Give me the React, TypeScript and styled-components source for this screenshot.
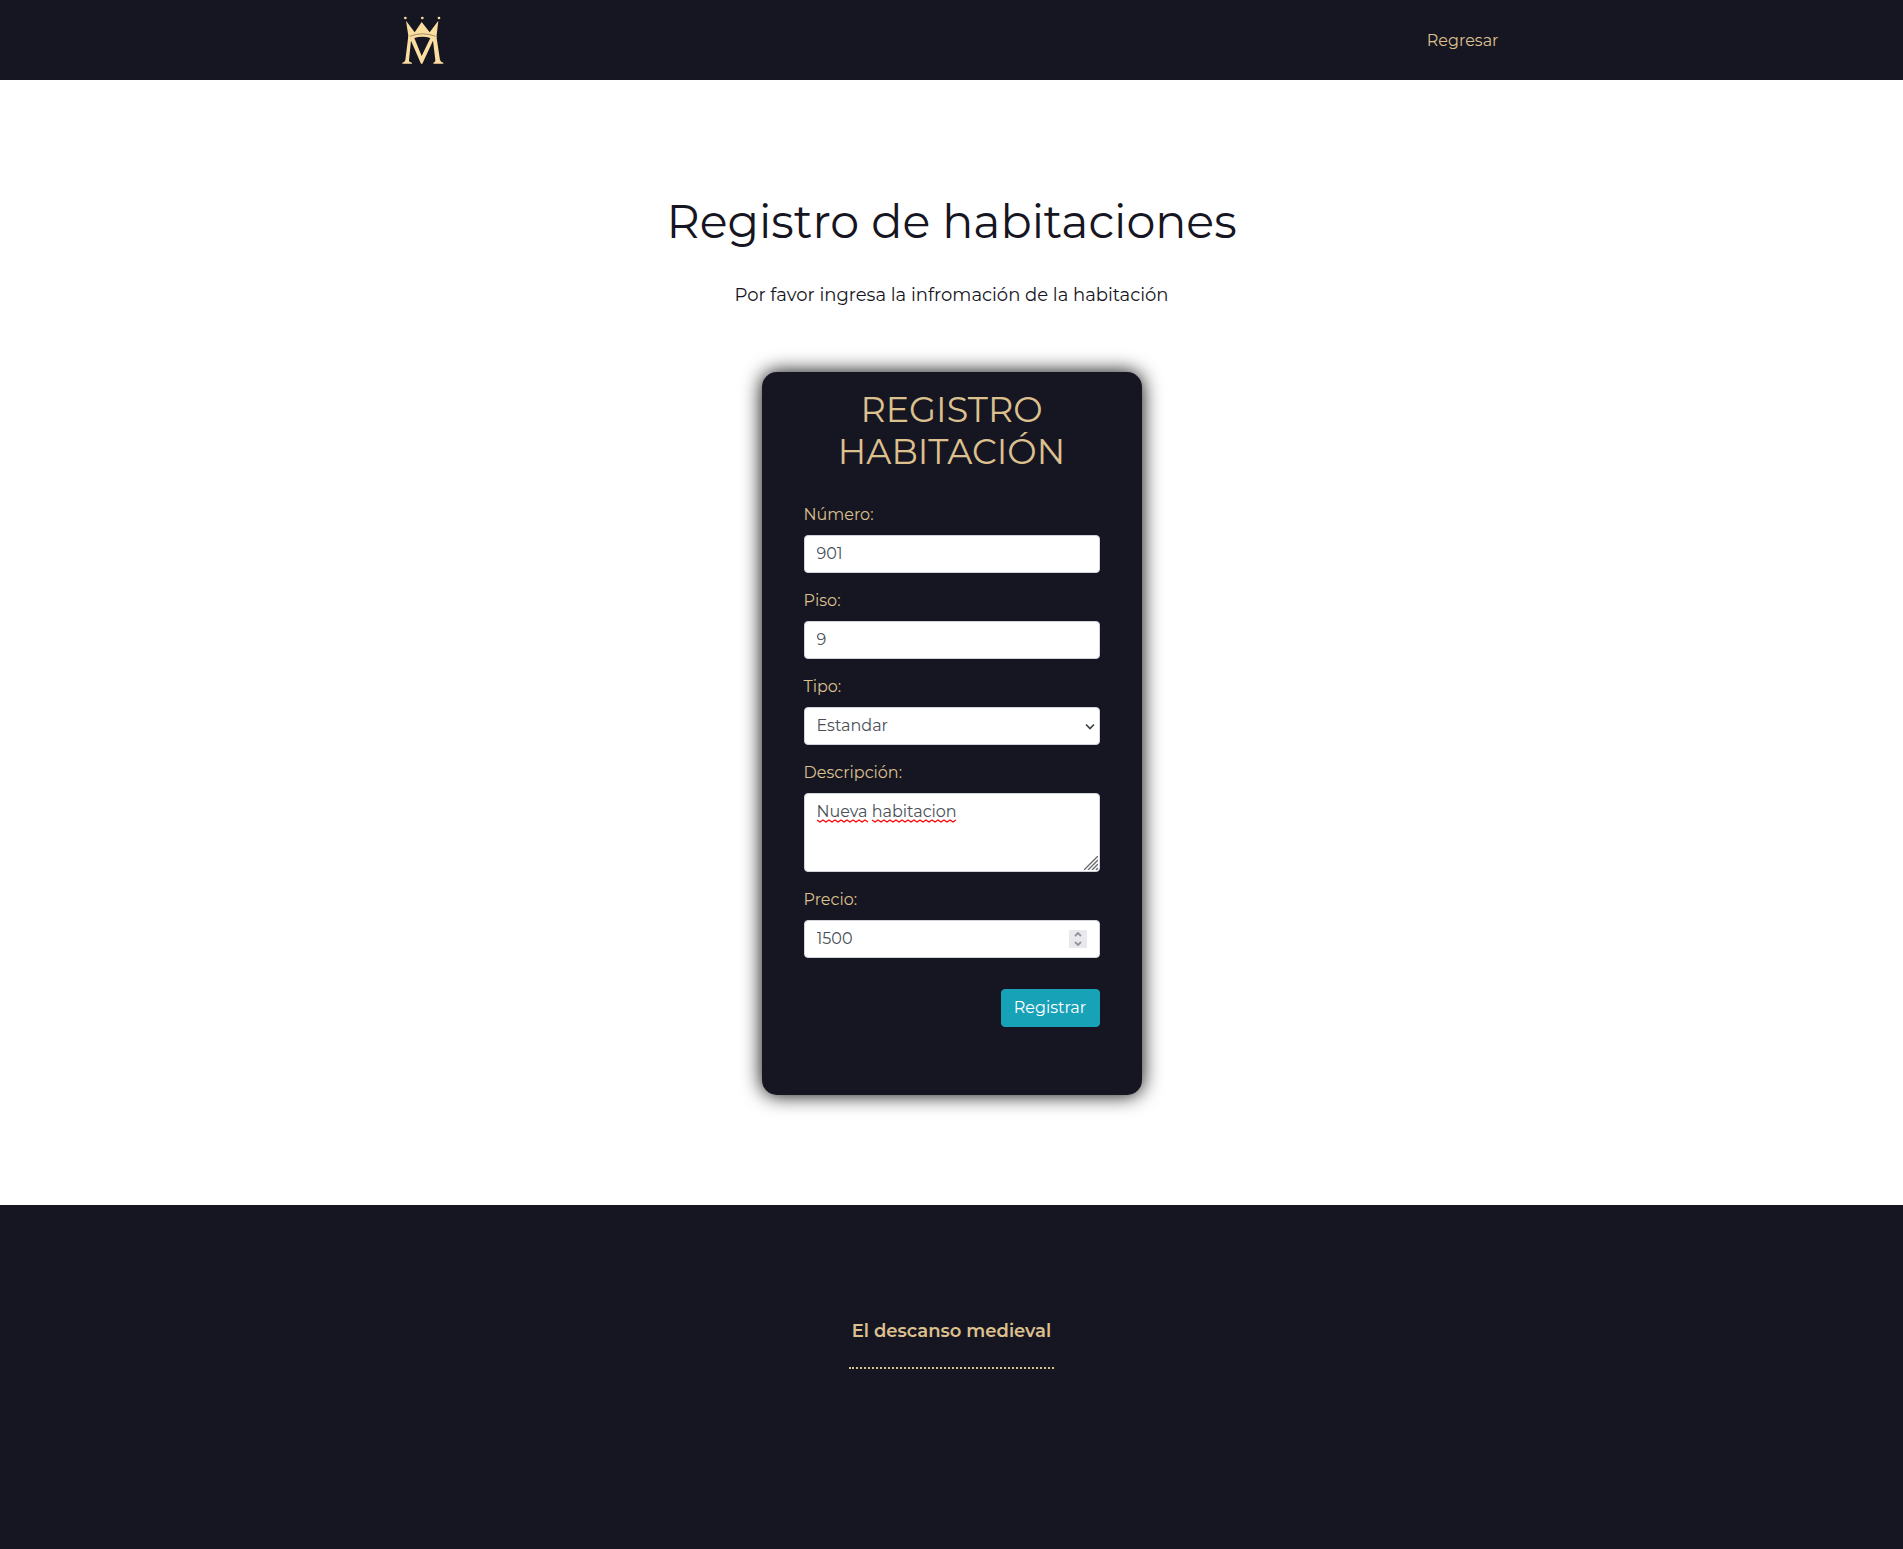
import React, { useState } from "react";
import styled, { createGlobalStyle } from "styled-components";

const ink = "#161522";
const gold = "#dcc08e";

const GlobalStyle = createGlobalStyle`
  *, *::before, *::after { box-sizing: border-box; }
  body {
    margin: 0;
    background: #fff;
    color: ${ink};
    font-family: Montserrat, Inter, "Liberation Sans", sans-serif;
    font-size: 16px;
    line-height: 24px;
  }
  button, input, select, textarea { font: inherit; }
`;

const Page = styled.div`
  min-height: 100vh;
  display: flex;
  flex-direction: column;
`;

const Header = styled.header`
  background: ${ink};
`;

const Nav = styled.nav`
  max-width: 1140px;
  height: 80px;
  margin: 0 auto;
  padding: 0 15px;
  display: flex;
  align-items: center;
  justify-content: space-between;
`;

const Brand = styled.a`
  display: flex;
`;

const NavLink = styled.a`
  padding: 10px 8px 8px;
  color: ${gold};
  text-decoration: none;
`;

const Main = styled.main`
  display: flex;
  flex-direction: column;
  align-items: center;
  padding: 112px 16px 110px;
`;

const Title = styled.h1`
  margin: 0;
  font-size: 46px;
  line-height: 60px;
  font-weight: 400;
  text-align: center;
`;

const Lead = styled.p`
  margin: 30px 0 64px;
  font-size: 18px;
  line-height: 26px;
  text-align: center;
`;

const Card = styled.form`
  width: 100%;
  max-width: 380px;
  padding: 17px 42px 68px;
  border-radius: 15px;
  background: ${ink};
  box-shadow: 0 0 20px #000;
  display: flex;
  flex-direction: column;
  gap: 16px;
`;

const CardTitle = styled.h2`
  margin: 0 0 14px;
  color: ${gold};
  font-size: 35px;
  line-height: 42px;
  font-weight: 400;
  text-align: center;
  text-transform: uppercase;
`;

const Field = styled.div`
  display: flex;
  flex-direction: column;
  gap: 8px;
`;

const Label = styled.label`
  color: ${gold};
`;

const Control = styled.div`
  position: relative;
  display: flex;
`;

const Input = styled.input`
  width: 100%;
  height: 38px;
  padding: 5px 12px 7px;
  border: 1px solid #ced4da;
  border-radius: 4px;
  background: #fff;
  color: #495057;
  appearance: textfield;
  &::-webkit-inner-spin-button { appearance: none; margin: 0; }
`;

const Select = styled(Input).attrs({ as: "select" })`
  padding: 6px 12px;
  appearance: none;
`;

const TextArea = styled(Input).attrs({ as: "textarea" })`
  height: 79px;
  padding: 6px 12px;
  resize: vertical;
  &::-webkit-resizer { display: none; }
`;

const Chevron = styled.svg`
  position: absolute;
  right: 5px;
  top: 15px;
  pointer-events: none;
`;

const Squiggle = styled.svg`
  position: absolute;
  left: 13px;
  top: 26px;
  pointer-events: none;
`;

const Grip = styled.svg`
  position: absolute;
  right: 2px;
  bottom: 2px;
  pointer-events: none;
`;

const Spinner = styled.div`
  position: absolute;
  right: 13px;
  top: 10px;
  width: 18px;
  height: 18px;
  display: flex;
  flex-direction: column;
  background: #e9e8ed;
`;

const Step = styled.button`
  flex: 1;
  min-height: 0;
  padding: 0;
  border: 0;
  background: none;
  display: flex;
  align-items: center;
  justify-content: center;
  cursor: pointer;
`;

const Submit = styled.button`
  align-self: flex-end;
  min-width: 99px;
  height: 38px;
  margin-top: 15px;
  padding: 6px 12px;
  border: 1px solid #17a2b8;
  border-radius: 4px;
  background: #17a2b8;
  color: #fff;
  cursor: pointer;
`;

const Footer = styled.footer`
  flex: 1;
  display: flex;
  flex-direction: column;
  align-items: center;
  padding: 112px 16px;
  background: ${ink};
  color: ${gold};
`;

const FooterTitle = styled.p`
  margin: 0;
  padding: 0 3px 22px;
  border-bottom: 2px dotted ${gold};
  font-size: 18px;
  line-height: 28px;
  font-weight: 600;
`;

const Logo = () => (
  <svg width="51" height="51" viewBox="50 43 153 153" fill="#fbdda0" aria-hidden="true">
    <circle cx="75" cy="52" r="4" />
    <circle cx="126" cy="52" r="4" />
    <circle cx="176" cy="52" r="4" />
    <path d="M77 60L103 95L124 64L148 95L174 60L168 112Q126 92 85 112Z" />
    <path d="M84 106Q126 92 168 106L179 178Q181 185 189 186V189H159V186Q166 185 165 178L158 120L126 189H122L92 120L86 178Q85 185 95 186V189H66V186Q74 185 75 178ZM102 112L124 166L150 112Q126 104 102 112Z" fillRule="evenodd" />
    <path d="M88 107Q126 92 166 107" fill="none" stroke="#76684f" strokeWidth="2" />
  </svg>
);

const Arrow = ({ up }: { up?: boolean }) => (
  <svg width="8" height="5" viewBox="0 0 8 5" fill="none" stroke="#94929c" strokeWidth="1.8" aria-hidden="true">
    <path d={up ? "M1 4L4 1L7 4" : "M1 1L4 4L7 1"} />
  </svg>
);

const zigzag = (from: number, to: number) => {
  let d = `M${from} 1`;
  for (let x = from + 3, low = true; x <= to; x += 3, low = !low) d += `L${x} ${low ? 3 : 1}`;
  return d;
};

export default function App() {
  const [price, setPrice] = useState(1500);
  return (
    <Page>
      <GlobalStyle />
      <Header>
        <Nav>
          <Brand href="#" aria-label="El descanso medieval"><Logo /></Brand>
          <NavLink href="#">Regresar</NavLink>
        </Nav>
      </Header>
      <Main>
        <Title>Registro de habitaciones</Title>
        <Lead>Por favor ingresa la infromación de la habitación</Lead>
        <Card onSubmit={(e) => e.preventDefault()}>
          <CardTitle>Registro habitación</CardTitle>
          <Field>
            <Label htmlFor="numero">Número:</Label>
            <Input id="numero" defaultValue="901" />
          </Field>
          <Field>
            <Label htmlFor="piso">Piso:</Label>
            <Input id="piso" defaultValue="9" />
          </Field>
          <Field>
            <Label htmlFor="tipo">Tipo:</Label>
            <Control>
              <Select id="tipo">
                <option>Estandar</option>
              </Select>
              <Chevron width="10" height="9" viewBox="0 0 10 9" fill="none" stroke="#3c4248" strokeWidth="1.7" aria-hidden="true">
                <path d="M1 2.5L5 6.5L9 2.5" />
              </Chevron>
            </Control>
          </Field>
          <Field>
            <Label htmlFor="descripcion">Descripción:</Label>
            <Control>
              <TextArea id="descripcion" spellCheck={false} defaultValue="Nueva habitacion" />
              <Squiggle width="144" height="4" fill="none" stroke="#f00" strokeWidth="1.2" aria-hidden="true">
                <path d={zigzag(0, 51)} />
                <path d={zigzag(55, 140)} />
              </Squiggle>
              <Grip width="14" height="14" viewBox="0 0 14 14" stroke="#66656a" strokeWidth="1.3" aria-hidden="true">
                <path d="M0 14L14 0M4 14L14 4M8 14L14 8M12 14L14 12" />
              </Grip>
            </Control>
          </Field>
          <Field>
            <Label htmlFor="precio">Precio:</Label>
            <Control>
              <Input id="precio" type="number" value={price} onChange={(e: React.ChangeEvent<HTMLInputElement>) => setPrice(Number(e.target.value))} />
              <Spinner>
                <Step type="button" aria-label="Aumentar precio" onClick={() => setPrice(price + 1)}><Arrow up /></Step>
                <Step type="button" aria-label="Reducir precio" onClick={() => setPrice(price - 1)}><Arrow /></Step>
              </Spinner>
            </Control>
          </Field>
          <Submit type="submit">Registrar</Submit>
        </Card>
      </Main>
      <Footer>
        <FooterTitle>El descanso medieval</FooterTitle>
      </Footer>
    </Page>
  );
}
